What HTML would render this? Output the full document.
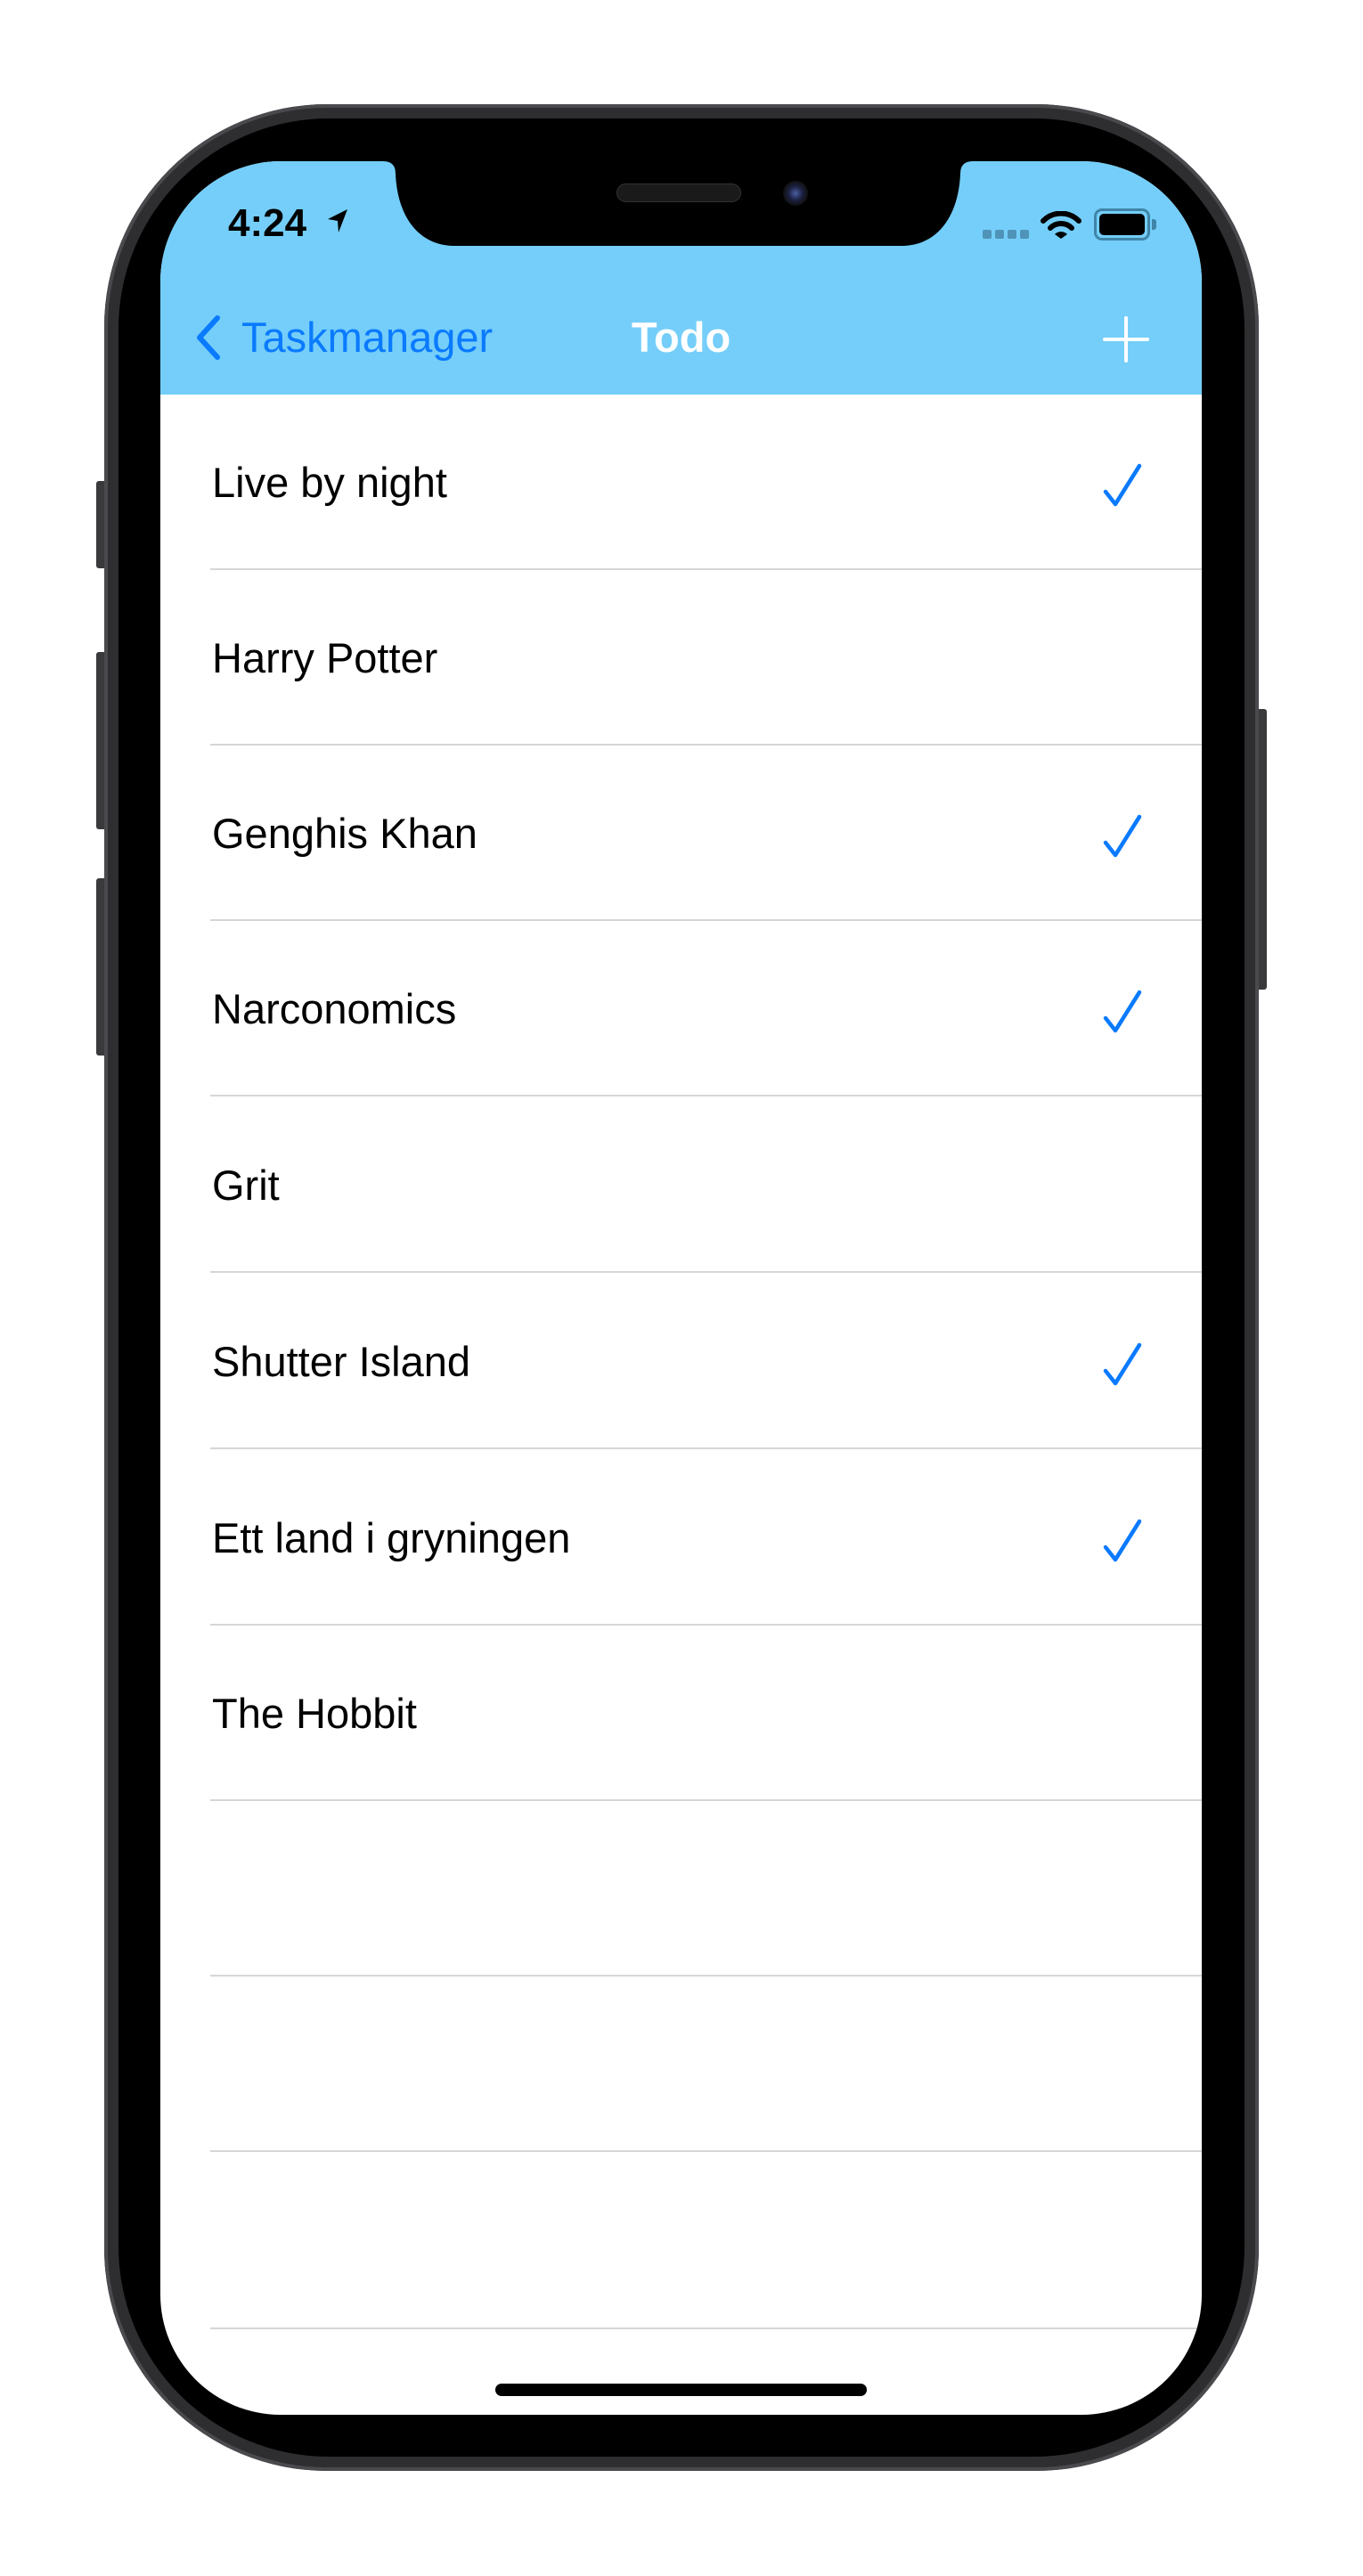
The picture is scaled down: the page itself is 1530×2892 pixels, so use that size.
<!DOCTYPE html>
<html><head><meta charset="utf-8"><style>
*{margin:0;padding:0;box-sizing:border-box}
body{width:1530px;height:2892px;background:#fff;position:relative;overflow:hidden;font-family:"Liberation Sans",sans-serif}
.abs{position:absolute}
.frame{left:117px;top:117px;width:1296px;height:2657px;border-radius:250px;background:#2e2e31;box-shadow:inset 0 0 0 4px #4a4a4e}
.bezel{left:133px;top:133px;width:1264px;height:2625px;border-radius:236px;background:#000}
.screen{left:180px;top:181px;width:1169px;height:2530px;border-radius:135px;background:#fff;overflow:hidden}
.nav{left:0;top:0;width:1169px;height:262px;background:#74cef9}
.sep{height:2px;background:#d6d6d8;left:56px;width:1113px}
.row{left:58px;height:120px;line-height:120px;font-size:47px;color:#000}
.btn{background:#3a3a3d;border-radius:3px}
</style></head><body>
<div class="abs btn" style="left:108px;top:540px;width:12px;height:98px"></div>
<div class="abs btn" style="left:108px;top:732px;width:12px;height:199px"></div>
<div class="abs btn" style="left:108px;top:986px;width:12px;height:199px"></div>
<div class="abs btn" style="left:1410px;top:796px;width:12px;height:315px"></div>
<div class="abs frame"></div>
<div class="abs bezel"></div>
<div class="abs screen">
  <div class="abs nav"></div>
  <svg class="abs" style="left:0;top:0" width="1169" height="100" viewBox="0 0 1169 100"><path d="M250,0 Q264,0 264,14 C266,62 290,95 330,95 L832,95 C872,95 896,62 898,14 Q898,0 912,0 Z" fill="#000"/></svg>
  <div class="abs" style="left:512px;top:25px;width:140px;height:21px;border-radius:11px;background:#1a1a1a;border:1px solid #333"></div>
  <div class="abs" style="left:699px;top:22px;width:28px;height:28px;border-radius:50%;background:radial-gradient(circle,#4a5ea0 0,#1b2040 40%,#111 70%)"></div>
  <!-- status -->
  <div class="abs" style="left:76px;top:47px;font-size:44px;font-weight:bold;color:#000;line-height:46px">4:24</div>
  <svg class="abs" style="left:186px;top:52px" width="26" height="30" viewBox="0 0 26 30"><path d="M24 2 L2 13 L13 15 L14 28 Z" fill="#000"/></svg>
  <div class="abs" style="left:923px;top:77px;width:10px;height:10px;border-radius:2px;background:#4f93b8"></div>
  <div class="abs" style="left:937px;top:77px;width:10px;height:10px;border-radius:2px;background:#4f93b8"></div>
  <div class="abs" style="left:951px;top:77px;width:10px;height:10px;border-radius:2px;background:#4f93b8"></div>
  <div class="abs" style="left:965px;top:77px;width:10px;height:10px;border-radius:2px;background:#4f93b8"></div>
  <svg class="abs" style="left:988px;top:56px" width="46" height="32" viewBox="0 0 46 32"><path d="M3 11 A28 28 0 0 1 43 11" stroke="#000" stroke-width="6" fill="none" stroke-linecap="round"/><path d="M11 19 A17 17 0 0 1 35 19" stroke="#000" stroke-width="6" fill="none" stroke-linecap="round"/><path d="M16 26 L23 31 L30 26 A10 10 0 0 0 16 26Z" fill="#000"/></svg>
  <div class="abs" style="left:1048px;top:53px;width:63px;height:36px;border-radius:9px;border:3px solid #3f85a8;background:#74cef9"></div>
  <div class="abs" style="left:1054px;top:59px;width:51px;height:24px;border-radius:5px;background:#000"></div>
  <div class="abs" style="left:1113px;top:65px;width:5px;height:12px;border-radius:0 3px 3px 0;background:#3f85a8"></div>
  <!-- nav items -->
  <svg class="abs" style="left:36px;top:172px" width="36" height="52" viewBox="0 0 36 52"><path d="M28 4 L8 26 L28 48" stroke="#0a7aff" stroke-width="6" fill="none" stroke-linecap="round" stroke-linejoin="round"/></svg>
  <div class="abs" style="left:91px;top:172px;font-size:47px;color:#0a7aff;line-height:52px">Taskmanager</div>
  <div class="abs" style="left:0;width:1169px;text-align:center;top:172px;font-size:47px;font-weight:bold;color:#fff;line-height:52px">Todo</div>
  <svg class="abs" style="left:1058px;top:174px" width="52" height="52" viewBox="0 0 52 52"><path d="M26 2 V50 M2 26 H50" stroke="#fff" stroke-width="4" stroke-linecap="round"/></svg>
  <!-- rows -->
  <div class="abs row" style="top:301px">Live by night</div>
  <div class="abs row" style="top:498px">Harry Potter</div>
  <div class="abs row" style="top:695px">Genghis Khan</div>
  <div class="abs row" style="top:892px">Narconomics</div>
  <div class="abs row" style="top:1090px">Grit</div>
  <div class="abs row" style="top:1288px">Shutter Island</div>
  <div class="abs row" style="top:1486px">Ett land i gryningen</div>
  <div class="abs row" style="top:1683px">The Hobbit</div>
  <div class="abs sep" style="top:457px"></div>
  <div class="abs sep" style="top:654px"></div>
  <div class="abs sep" style="top:851px"></div>
  <div class="abs sep" style="top:1048px"></div>
  <div class="abs sep" style="top:1246px"></div>
  <div class="abs sep" style="top:1444px"></div>
  <div class="abs sep" style="top:1642px"></div>
  <div class="abs sep" style="top:1839px"></div>
  <div class="abs sep" style="top:2036px"></div>
  <div class="abs sep" style="top:2233px"></div>
  <div class="abs sep" style="top:2432px"></div>
  <svg class="abs" style="left:1055px;top:337px" width="50" height="56" viewBox="0 0 50 56"><path d="M6 34 L17 48 L44 5" stroke="#0a7aff" stroke-width="4.5" fill="none" stroke-linecap="round" stroke-linejoin="round"/></svg>
  <svg class="abs" style="left:1055px;top:731px" width="50" height="56" viewBox="0 0 50 56"><path d="M6 34 L17 48 L44 5" stroke="#0a7aff" stroke-width="4.5" fill="none" stroke-linecap="round" stroke-linejoin="round"/></svg>
  <svg class="abs" style="left:1055px;top:928px" width="50" height="56" viewBox="0 0 50 56"><path d="M6 34 L17 48 L44 5" stroke="#0a7aff" stroke-width="4.5" fill="none" stroke-linecap="round" stroke-linejoin="round"/></svg>
  <svg class="abs" style="left:1055px;top:1324px" width="50" height="56" viewBox="0 0 50 56"><path d="M6 34 L17 48 L44 5" stroke="#0a7aff" stroke-width="4.5" fill="none" stroke-linecap="round" stroke-linejoin="round"/></svg>
  <svg class="abs" style="left:1055px;top:1522px" width="50" height="56" viewBox="0 0 50 56"><path d="M6 34 L17 48 L44 5" stroke="#0a7aff" stroke-width="4.5" fill="none" stroke-linecap="round" stroke-linejoin="round"/></svg>
  <div class="abs" style="left:376px;top:2495px;width:417px;height:14px;border-radius:7px;background:#000"></div>
</div>
</body></html>
